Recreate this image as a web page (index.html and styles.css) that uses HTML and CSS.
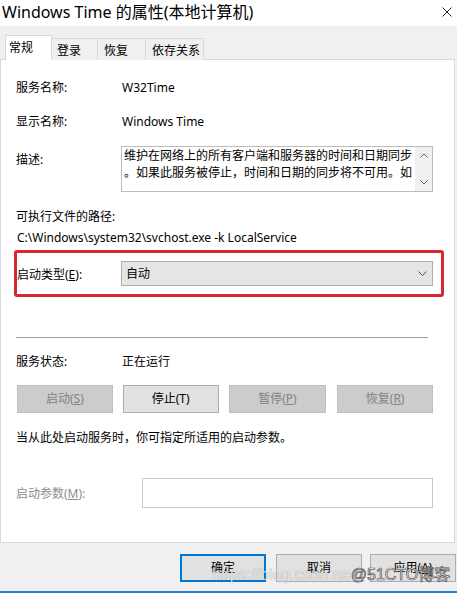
FILE: index.html
```html
<!DOCTYPE html>
<html lang="zh-CN">
<head>
    <meta charset="UTF-8">
    <title>Windows Time 的属性(本地计算机)</title>
    <link rel="stylesheet" href="styles.css">
</head>
<body>
<div class="window">
    <div class="titlebar">
        <span class="title">Windows Time 的属性(本地计算机)</span>
        <svg class="close" viewBox="0 0 10 10"><path d="M0.5 0.5L9.5 9.5M9.5 0.5L0.5 9.5" stroke="#222" stroke-width="1" fill="none"/></svg>
    </div>
    <div class="tabs">
        <div class="tab active">常规</div>
        <div class="tab t2">登录</div>
        <div class="tab t3">恢复</div>
        <div class="tab t4">依存关系</div>
    </div>
    <div class="panel">
        <div class="row">
            <span class="label">服务名称:</span>
            <span>W32Time</span>
        </div>
        <div class="row r2">
            <span class="label">显示名称:</span>
            <span>Windows Time</span>
        </div>
        <div class="desc">
            <span class="label">描述:</span>
            <div class="textbox">
                <div class="text">
                    <span>维护在网络上的所有客户端和服务器的时间和日期同步</span>
                    <span>。如果此服务被停止，时间和日期的同步将不可用。如</span>
                </div>
                <div class="scroll">
                    <div class="arrow"><svg viewBox="0 0 8 5"><path d="M0.5 4.5L4 1L7.5 4.5" stroke="#606060" fill="none"/></svg></div>
                    <div class="arrow"><svg viewBox="0 0 8 5"><path d="M0.5 0.5L4 4L7.5 0.5" stroke="#606060" fill="none"/></svg></div>
                </div>
            </div>
        </div>
        <div class="row path-label">可执行文件的路径:</div>
        <div class="row path">C:\Windows\system32\svchost.exe -k LocalService</div>
        <div class="startup">
            <span class="label">启动类型(<u>E</u>):</span>
            <div class="combo">
                <span>自动</span>
                <svg viewBox="0 0 9 5"><path d="M0.5 0.5L4.5 4.5L8.5 0.5" stroke="#505050" fill="none"/></svg>
            </div>
        </div>
        <div class="sep"></div>
        <div class="row status">
            <span class="label">服务状态:</span>
            <span>正在运行</span>
        </div>
        <div class="buttons">
            <div class="btn disabled">启动(<u>S</u>)</div>
            <div class="btn">停止(T)</div>
            <div class="btn disabled wide">暂停(<u>P</u>)</div>
            <div class="btn disabled last">恢复(<u>R</u>)</div>
        </div>
        <div class="row hint">当从此处启动服务时，你可指定所适用的启动参数。</div>
        <div class="param">
            <span class="label">启动参数(<u>M</u>):</span>
            <div class="input"></div>
        </div>
    </div>
    <div class="footer">
        <div class="fbtn default">确定</div>
        <div class="fbtn cancel">取消</div>
        <div class="fbtn apply">应用(<u>A</u>)</div>
    </div>
    <div class="frame-bottom"></div>
    <div class="watermark"><span class="url">https://blog.csdn.ne</span><span class="brand">@51CTO博客</span></div>
</div>
</body>
</html>
```

FILE: styles.css
```css
*{ margin:0; padding:0; box-sizing:border-box;}
body{
    width: 457px;
    height: 593px;
    overflow: hidden;
    background: #f0f0f0;
    color: #000;
    font-family: "Noto Sans", "Noto Sans CJK SC", sans-serif;
    font-size: 12px;
}
.window{
    position: relative;
    height: 593px;
    display: flex;
    flex-direction: column;
}
.titlebar{
    height: 26px;
    flex: none;
    background: #fff;
    display: flex;
    align-items: center;
    justify-content: space-between;
    padding: 0 5px 2px 2px;
}
.title{
    font-size: 16px;
    line-height: 20px;
}
.close{
    width: 10px;
    height: 10px;
}
.tabs{
    display: flex;
    align-items: flex-end;
    height: 25px;
    flex: none;
    margin: 9px 0 -1px 0;
    padding-left: 5px;
    position: relative;
    z-index: 1;
}
.tab{
    height: 22px;
    border: 1px solid #d9d9d9;
    border-bottom: none;
    background: #f0f0f0;
    padding: 2px 0 0 5px;
    line-height: 19px;
    margin-left: -1px;
}
.tab.active{
    height: 25px;
    width: 47px;
    margin-left: 0;
    background: #fff;
    padding: 0 0 0 3px;
    line-height: 24px;
    position: relative;
    z-index: 2;
}
.t2{ width: 47px;}
.t3{ width: 49px; padding-left: 6px;}
.t4{ width: 59px; padding-left: 6px;}
.panel{
    width: 455px;
    height: 484px;
    flex: none;
    background: #fff;
    border: 1px solid #d9d9d9;
    padding: 18px 21px 0 15px;
}
.row{
    display: flex;
    align-items: center;
    height: 20px;
    line-height: 20px;
    white-space: nowrap;
}
.label{
    width: 106px;
    flex: none;
}
.r2{ margin-top: 14px;}
.desc{
    display: flex;
    align-items: flex-start;
    margin-top: 14px;
    height: 46px;
}
.desc .label{
    width: 105px;
    padding-top: 4px;
    line-height: 20px;
}
.textbox{
    width: 312px;
    height: 46px;
    border: 1px solid #bcbcbc;
    display: flex;
    overflow: hidden;
}
.textbox .text{
    flex: 1;
    padding-left: 2px;
    line-height: 17px;
    white-space: nowrap;
    overflow: hidden;
}
.textbox .text span{ display: block;}
.scroll{
    width: 17px;
    flex: none;
    background: #f0f0f0;
    display: flex;
    flex-direction: column;
    justify-content: space-between;
}
.arrow{
    height: 17px;
    display: flex;
    align-items: center;
    justify-content: center;
}
.arrow svg{
    width: 8px;
    height: 5px;
}
.path-label{ margin-top: 15px;}
.path{ margin-top: 1px; padding-left: 1px;}
.startup{
    display: flex;
    align-items: center;
    height: 47px;
    margin: 2px -11px 0 -2px;
    border: 3px solid #d7282f;
    border-radius: 3px;
    padding-right: 8px;
}
.startup .label{
    width: 104px;
}
.combo{
    flex: 1;
    height: 25px;
    background: #e5e5e5;
    border: 1px solid #adadad;
    display: flex;
    align-items: center;
    justify-content: space-between;
    padding: 0 5px 0 4px;
    line-height: 20px;
}
.combo svg{
    width: 9px;
    height: 5px;
}
.sep{
    width: 412px;
    height: 1px;
    margin-top: 40px;
    background: #a0a0a0;
}
.status{ margin-top: 14px;}
.buttons{
    display: flex;
    gap: 10px;
    height: 28px;
    margin: 13px 0 0 1px;
}
.btn{
    width: 96px;
    height: 28px;
    border: 1px solid #adadad;
    background: #e1e1e1;
    text-align: center;
    line-height: 26px;
}
.btn.wide{ width: 98px;}
.btn.last{ margin-left: 1px;}
.btn.disabled{
    background: #cccccc;
    border-color: #bfbfbf;
    color: #838383;
}
.hint{ margin-top: 15px;}
.param{
    display: flex;
    align-items: center;
    height: 30px;
    margin-top: 30px;
}
.param .label{
    width: 126px;
    color: #8d8d8d;
}
.input{
    flex: 1;
    height: 30px;
    border: 1px solid #c8c8c8;
    background: #fff;
}
.footer{
    flex: 1;
    display: flex;
    justify-content: flex-end;
    align-items: flex-start;
    padding: 11px 1px 0 0;
}
.fbtn{
    width: 86px;
    height: 28px;
    border: 1px solid #adadad;
    background: #e1e1e1;
    text-align: center;
    line-height: 26px;
}
.fbtn.default{
    border: 2px solid #0078d7;
    line-height: 24px;
}
.cancel{ margin-left: 10px;}
.apply{ margin-left: 8px;}
.frame-bottom{
    height: 2px;
    flex: none;
    background: #2b7bcf;
}
/* watermark over the footer buttons */
.watermark{
    position: absolute;
    left: 212px;
    top: 564px;
    font-family: "Liberation Sans", "Noto Sans CJK SC", sans-serif;
    font-size: 16px;
    line-height: 22px;
    white-space: nowrap;
}
.watermark .url{
    color: rgba(255,255,255,.75);
    text-shadow: 0 0 1px rgba(0,0,0,.4);
}
.watermark .brand{
    color: rgba(255,255,255,.95);
    -webkit-text-stroke: .7px #505050;
}
```
